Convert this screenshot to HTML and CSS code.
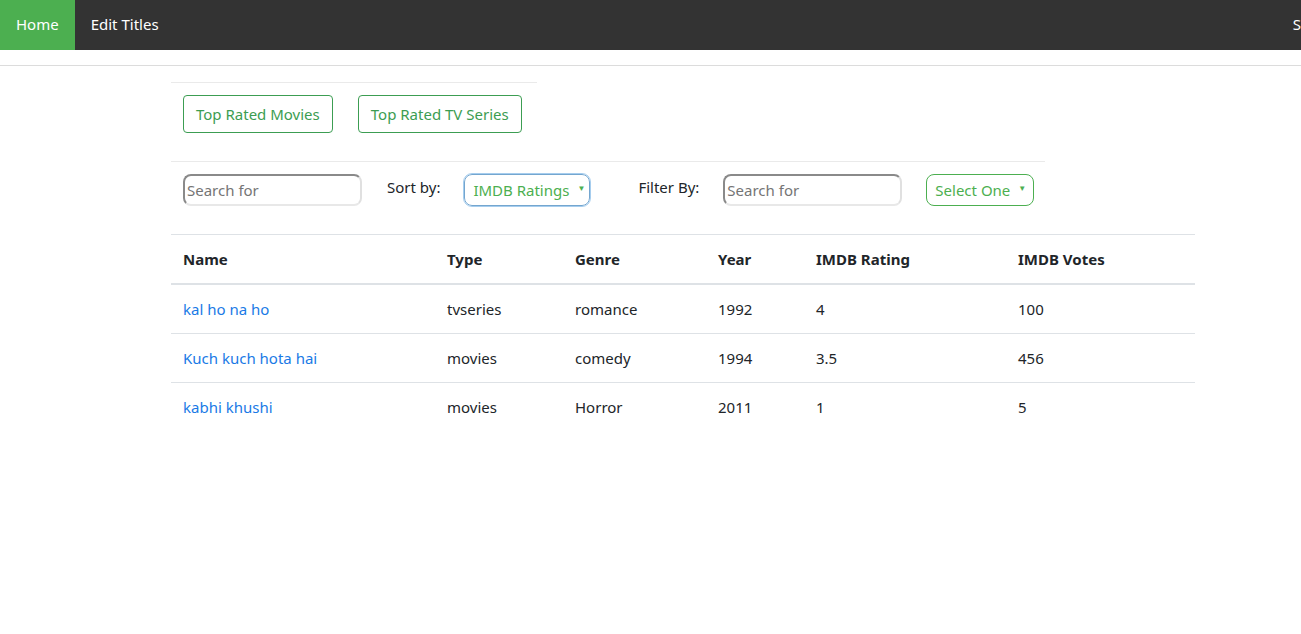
FILE: index.html
```html
<!DOCTYPE html>
<html lang="en">
<head>
<meta charset="utf-8">
<title>Titles</title>
<link rel="stylesheet" href="styles.css">
</head>
<body>
<nav class="navbar">
  <a class="nav-link active" href="#">Home</a>
  <a class="nav-link" href="#">Edit Titles</a>
  <span class="nav-spacer"></span>
  <a class="nav-link nav-right" href="#">S</a>
</nav>
<div class="rule"></div>
<main class="page">
  <div class="top-buttons">
    <button class="btn-outline">Top Rated Movies</button>
    <button class="btn-outline">Top Rated TV Series</button>
  </div>
  <div class="filters">
    <input class="search" type="text" placeholder="Search for">
    <label class="lbl">Sort by:</label>
    <div class="select select-focus">IMDB Ratings<span class="caret">▼</span></div>
    <label class="lbl lbl-filter">Filter By:</label>
    <input class="search" type="text" placeholder="Search for">
    <div class="select">Select One<span class="caret">▼</span></div>
  </div>
  <table class="table">
    <thead>
      <tr>
        <th class="c-name">Name</th>
        <th class="c-type">Type</th>
        <th class="c-genre">Genre</th>
        <th class="c-year">Year</th>
        <th class="c-rating">IMDB Rating</th>
        <th class="c-votes">IMDB Votes</th>
      </tr>
    </thead>
    <tbody>
      <tr>
        <td><a href="#">kal ho na ho</a></td>
        <td>tvseries</td>
        <td>romance</td>
        <td>1992</td>
        <td>4</td>
        <td>100</td>
      </tr>
      <tr>
        <td><a href="#">Kuch kuch hota hai</a></td>
        <td>movies</td>
        <td>comedy</td>
        <td>1994</td>
        <td>3.5</td>
        <td>456</td>
      </tr>
      <tr>
        <td><a href="#">kabhi khushi</a></td>
        <td>movies</td>
        <td>Horror</td>
        <td>2011</td>
        <td>1</td>
        <td>5</td>
      </tr>
    </tbody>
  </table>
</main>
</body>
</html>
```
FILE: styles.css
```css
* { box-sizing: border-box; }
html, body { margin: 0; padding: 0; }
body {
  font-family: "Noto Sans", "Open Sans", sans-serif;
  font-size: 15px;
  color: #212529;
  background: #fff;
  overflow: hidden;
}
.navbar {
  display: flex;
  height: 50px;
  background: #333;
  overflow: hidden;
}
.nav-link {
  display: block;
  padding: 0 16px 2px;
  line-height: 48px;
  color: #fff;
  text-decoration: none;
  white-space: nowrap;
}
.nav-link.active { background: #4caf50; }
.nav-spacer { flex: 1; }
.nav-right { padding: 0 0 2px 0; margin-right: 0; }
.rule {
  margin-top: 15px;
  border-top: 1px solid #dcdcdc;
}
.page {
  padding-left: 171px;
  padding-top: 16px;
}
.top-buttons {
  width: 366px;
  border-top: 1px solid #eaeaea;
  padding: 12px 0 28px 12px;
  display: flex;
  gap: 25px;
}
.btn-outline {
  font-family: inherit;
  font-size: 15px;
  height: 38px;
  padding: 0 12px;
  background: #fff;
  color: #3c9d52;
  border: 1px solid #3c9d52;
  border-radius: 4px;
  line-height: 36px;
}
.filters {
  width: 874px;
  border-top: 1px solid #eaeaea;
  padding: 12px 0 28px 12px;
  display: flex;
  align-items: flex-start;
}
.search {
  width: 179px;
  height: 32px;
  font-family: inherit;
  font-size: 15px;
  padding: 0 2px;
  border-radius: 8px;
  border: 2px solid;
  border-color: #8a8a8a #e0e0e0 #e8e8e8 #8a8a8a;
  color: #333;
  outline: none;
}
.search::placeholder { color: #757575; }
.lbl {
  margin-left: 25px;
  margin-right: 24px;
  padding-top: 3px;
  line-height: 20px;
  white-space: nowrap;
}
.lbl-filter { margin-left: 48px; }
.select {
  height: 32px;
  display: flex;
  align-items: center;
  padding: 0 7px 0 8px;
  border: 1px solid #4caf50;
  border-radius: 8px;
  color: #4caf50;
  white-space: nowrap;
}
.select-focus {
  border-color: #74a6cf;
  outline: 1px solid #a6cdee;
  width: 126px;
}
.filters .search + .select { margin-left: 24px; }
.caret {
  font-size: 8px;
  margin-left: auto;
  padding-left: 8px;
  padding-bottom: 6px;
}
.table {
  width: 1024px;
  border-collapse: collapse;
}
.table th, .table td {
  text-align: left;
  padding: 12px;
  line-height: 24px;
  border-top: 1px solid #dee2e6;
  vertical-align: top;
}
.table thead th {
  border-bottom: 2px solid #dee2e6;
  font-weight: bold;
}
.table a { color: #1a7ae6; text-decoration: none; }
.c-name { width: 264px; }
.c-type { width: 128px; }
.c-genre { width: 143px; }
.c-year { width: 98px; }
.c-rating { width: 202px; }
.c-votes { width: 189px; }
```
